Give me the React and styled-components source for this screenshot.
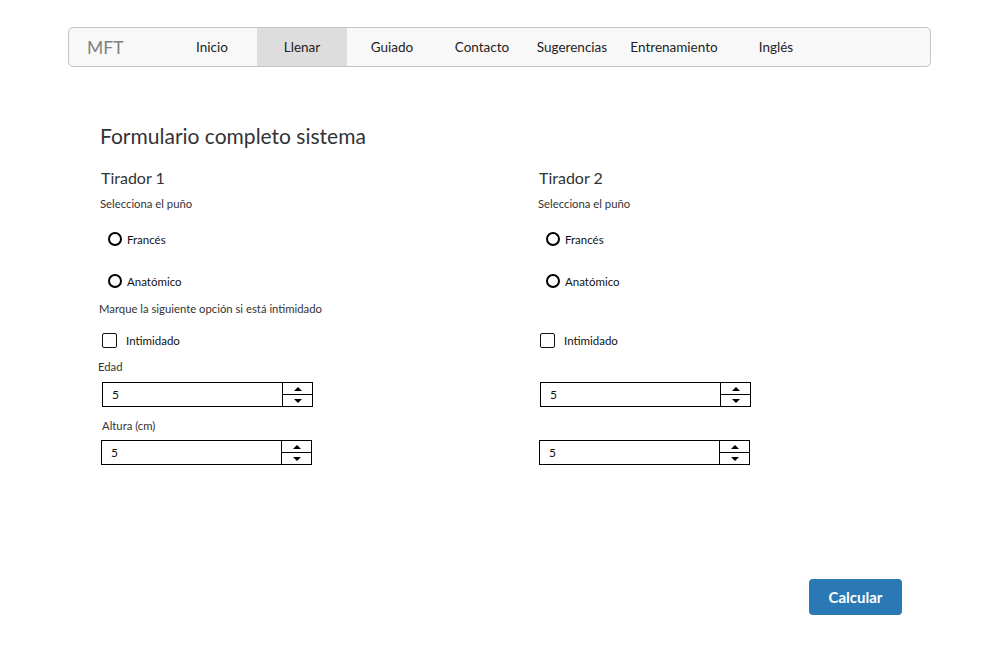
import React from "react";
import styled, { createGlobalStyle } from "styled-components";

const Global = createGlobalStyle`
  html, body { margin: 0; padding: 0; background: #fff; }
  body { font-family: Lato, "Noto Sans", sans-serif; color: #333; }
  * { box-sizing: border-box; }
`;

const Nav = styled.nav`
  margin: 27px 0 0 68px;
  width: 863px;
  height: 40px;
  display: flex;
  align-items: stretch;
  background: #f8f8f8;
  border: 1px solid #c4c4c4;
  border-radius: 5px;
  overflow: hidden;
`;

const Brand = styled.div`
  width: 98px;
  padding-left: 18px;
  display: flex;
  align-items: center;
  font-size: 17.5px;
  font-weight: 400;
  color: #808080;
`;

const NavItem = styled.a`
  width: ${(p) => (p.$wide ? 114 : 90)}px;
  display: flex;
  align-items: center;
  justify-content: center;
  font-size: 13.5px;
  color: #222;
  background: ${(p) => (p.$active ? "#dddddd" : "transparent")};
  cursor: pointer;
`;

const Main = styled.main`
  padding-left: 100px;
`;

const Title = styled.h1`
  margin: 54px 0 0;
  font-size: 21px;
  line-height: 30px;
  font-weight: 400;
  color: #333;
`;

const Columns = styled.div`
  display: grid;
  grid-template-columns: 438px 438px;
`;

const Column = styled.section`
  display: flex;
  flex-direction: column;
  align-items: flex-start;
`;

const ColumnTitle = styled.h2`
  margin: 15px 0 0 1px;
  font-size: 16px;
  line-height: 24px;
  font-weight: 400;
  color: #333;
`;

const SmallLabel = styled.div`
  margin-top: ${(p) => p.$mt}px;
  margin-left: ${(p) => p.$ml || 0}px;
  font-size: 11.3px;
  line-height: 16px;
  color: #333;
  visibility: ${(p) => (p.$hidden ? "hidden" : "visible")};
`;

const OptionRow = styled.label`
  margin-top: ${(p) => p.$mt}px;
  height: 20px;
  display: flex;
  align-items: center;
  font-size: 11.5px;
  color: #111;
`;

const Radio = styled.span`
  width: 14px;
  height: 14px;
  margin: 0 5px 0 8px;
  border: 2px solid #000;
  border-radius: 50%;
  display: inline-block;
`;

const Check = styled.span`
  width: 15px;
  height: 15px;
  margin: 0 9px 0 2px;
  border: 1.5px solid #111;
  border-radius: 2px;
  display: inline-block;
`;

const NumberBox = styled.div`
  margin-top: ${(p) => p.$mt}px;
  margin-left: ${(p) => p.$ml}px;
  width: 211px;
  height: 25px;
  display: flex;
  border: 1px solid #000;
`;

const NumberValue = styled.input`
  flex: 1;
  min-width: 0;
  border: none;
  outline: none;
  padding: 0 0 0 9px;
  font-family: inherit;
  font-size: 12px;
  color: #111;
  background: #fff;
`;

const Spinner = styled.div`
  width: 30px;
  border-left: 1px solid #000;
  display: flex;
  flex-direction: column;
`;

const SpinButton = styled.div`
  flex: 1;
  display: flex;
  align-items: center;
  justify-content: center;
  & + & { border-top: 1px solid #000; }
`;

const Footer = styled.div`
  margin-top: 114px;
  padding-right: 105px;
  display: flex;
  justify-content: flex-end;
`;

const Button = styled.button`
  width: 93px;
  height: 36px;
  border: none;
  border-radius: 4px;
  background: #2b79b4;
  color: #fff;
  font-family: inherit;
  font-size: 15px;
  font-weight: 700;
  cursor: pointer;
`;

const Tri = ({ up }) => (
  <svg width="8" height="4" viewBox="0 0 8 4">
    <polygon points={up ? "0,4 8,4 4,0" : "0,0 8,0 4,4"} fill="#000" />
  </svg>
);

const NumberInput = ({ mt, ml }) => (
  <NumberBox $mt={mt} $ml={ml}>
    <NumberValue type="text" defaultValue="5" readOnly />
    <Spinner>
      <SpinButton><Tri up /></SpinButton>
      <SpinButton><Tri /></SpinButton>
    </Spinner>
  </NumberBox>
);

const Shooter = ({ title, first }) => (
  <Column>
    <ColumnTitle>{title}</ColumnTitle>
    <SmallLabel $mt={6}>Selecciona el puño</SmallLabel>
    <OptionRow $mt={17}><Radio />Francés</OptionRow>
    <OptionRow $mt={22}><Radio />Anatómico</OptionRow>
    <SmallLabel $mt={10} $ml={-1} $hidden={!first}>
      Marque la siguiente opción si está intimidado
    </SmallLabel>
    <OptionRow $mt={13}><Check />Intimidado</OptionRow>
    <SmallLabel $mt={9} $ml={-2} $hidden={!first}>Edad</SmallLabel>
    <NumberInput mt={7} ml={2} />
    <SmallLabel $mt={11} $ml={2} $hidden={!first}>Altura (cm)</SmallLabel>
    <NumberInput mt={6} ml={1} />
  </Column>
);

export default function App() {
  const items = ["Inicio", "Llenar", "Guiado", "Contacto", "Sugerencias", "Entrenamiento", "Inglés"];
  return (
    <>
      <Global />
      <Nav>
        <Brand>MFT</Brand>
        {items.map((t) => (
          <NavItem key={t} $active={t === "Llenar"} $wide={t === "Entrenamiento"}>
            {t}
          </NavItem>
        ))}
      </Nav>
      <Main>
        <Title>Formulario completo sistema</Title>
        <Columns>
          <Shooter title="Tirador 1" first />
          <Shooter title="Tirador 2" />
        </Columns>
      </Main>
      <Footer>
        <Button>Calcular</Button>
      </Footer>
    </>
  );
}
